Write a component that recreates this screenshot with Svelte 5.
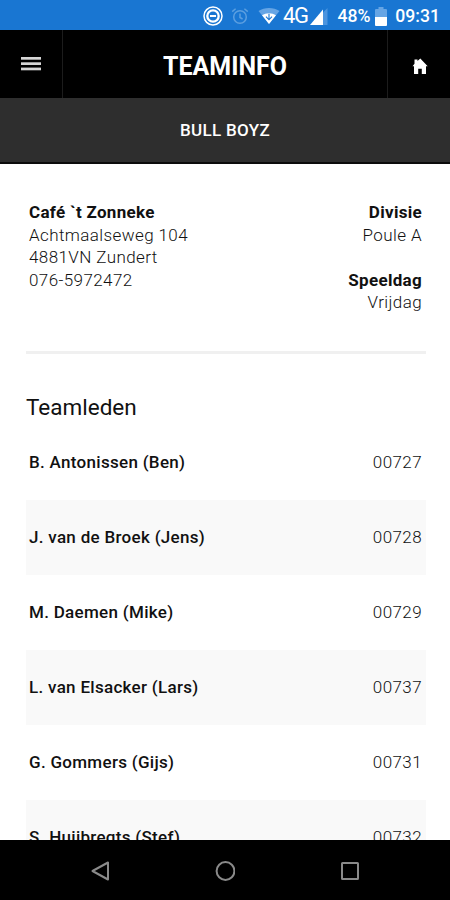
<script lang="ts">
    interface Member
    {
        name: string;
        code: string;
    }

    const members: Member[] = [
        { name: 'B. Antonissen (Ben)', code: '00727' },
        { name: 'J. van de Broek (Jens)', code: '00728' },
        { name: 'M. Daemen (Mike)', code: '00729' },
        { name: 'L. van Elsacker (Lars)', code: '00737' },
        { name: 'G. Gommers (Gijs)', code: '00731' },
        { name: 'S. Huijbregts (Stef)', code: '00732' }
    ];
</script>

<div class="screen">
    <div class="status-bar">
        <svg class="dnd" width="20" height="20" viewBox="0 0 20 20" fill="none" stroke="#ffffff">
            <circle cx="10" cy="10" r="9" stroke-width="1.5" />
            <circle cx="10" cy="10" r="5.7" stroke-width="2.3" />
            <path d="M7 10h6" stroke-width="2" />
        </svg>
        <svg class="alarm" width="18" height="18" viewBox="0 0 18 18" fill="none" stroke="#5c9fe0" stroke-width="1.5">
            <circle cx="9" cy="10" r="6.3" />
            <path d="M9 6.5v4l2.6 1.5M1.2 4.6l3.4-2.9M16.8 4.6l-3.4-2.9" />
        </svg>
        <svg class="wifi" width="22" height="18" viewBox="0 0 22 18">
            <path d="M11 17L0.5 4C6.5 0 15.5 0 21.5 4z" fill="#66a5e5" />
            <path d="M11 17L4 8.3C8 5.5 14 5.5 18 8.3z" fill="#ffffff" />
            <path d="M11 6.8v6M8 9.6l3 3.2 3-3.2" fill="none" stroke="#1976d2" stroke-width="1.1" />
        </svg>
        <span class="network">4G</span>
        <svg class="signal" width="18" height="17" viewBox="0 0 18 17">
            <path d="M13 4.4L17.5 0v17H13z" fill="#4b94df" />
            <path d="M13 1.5V17H0z" fill="#ffffff" />
        </svg>
        <span class="percent">48%</span>
        <svg class="battery" width="12" height="19" viewBox="0 0 12 19">
            <path d="M3.5 0h5v2H11q1 0 1 1v7H0V3q0-1 1-1h2.5z" fill="#66a5e5" />
            <path d="M0 10h12v8q0 1-1 1H1q-1 0-1-1z" fill="#ffffff" />
        </svg>
        <span class="time">09:31</span>
    </div>

    <header class="app-bar">
        <button class="bar-button menu" aria-label="Menu">
            <svg width="20" height="14" viewBox="0 0 20 14" fill="#d6d6d6">
                <rect y="0" width="20" height="2.7" />
                <rect y="5.3" width="20" height="2.7" />
                <rect y="10.6" width="20" height="2.7" />
            </svg>
        </button>
        <h1>TEAMINFO</h1>
        <button class="bar-button home" aria-label="Home">
            <svg width="16" height="17" viewBox="0 0 16 17" fill="#ffffff">
                <path d="M8.3 0.5L5.5 3V1.6H2.5V5.7L0.5 8.2H2V16h4.2v-5.2h3.6V16H14V8.2h1.7z" />
            </svg>
        </button>
    </header>

    <div class="team-name">BULL BOYZ</div>

    <main>
        <section class="details">
            <div>
                <strong>Café `t Zonneke</strong>
                <span>Achtmaalseweg 104</span>
                <span>4881VN Zundert</span>
                <span>076-5972472</span>
            </div>
            <div class="league">
                <strong>Divisie</strong>
                <span>Poule A</span>
                <strong class="spaced">Speeldag</strong>
                <span>Vrijdag</span>
            </div>
        </section>

        <h2>Teamleden</h2>

        <ul>
            {#each members as member (member.code)}
                <li>
                    <strong>{member.name}</strong>
                    <span>{member.code}</span>
                </li>
            {/each}
        </ul>
    </main>

    <nav class="nav-bar">
        <svg width="20" height="20" viewBox="0 0 20 20">
            <path d="M18 1.5v17L2.5 10z" />
        </svg>
        <svg width="20" height="20" viewBox="0 0 20 20">
            <circle cx="10.5" cy="10" r="8.9" />
        </svg>
        <svg width="20" height="20" viewBox="0 0 20 20">
            <rect x="2" y="2" width="16" height="16" rx="0.5" />
        </svg>
    </nav>
</div>

<style>
    :global(body)
    {
        margin: 0;
    }

    .screen
    {
        width: 450px;
        height: 900px;
        display: flex;
        flex-direction: column;
        overflow: hidden;
        background: #ffffff;
        color: #111111;
        font-family: Roboto, sans-serif;
        font-size: 17px;
        line-height: 22.5px;
        letter-spacing: 0.3px;
    }

    .status-bar
    {
        height: 30px;
        flex-shrink: 0;
        padding: 2px 10px 0 0;
        box-sizing: border-box;
        display: flex;
        align-items: center;
        justify-content: flex-end;
        background: #1976d2;
        color: #ffffff;
        font-weight: 500;
        font-size: 17.6px;
        letter-spacing: 0;
    }

    .alarm
    {
        margin-left: 8px;
    }

    .wifi
    {
        margin-left: 9px;
    }

    .network
    {
        margin-left: 3px;
        font-size: 22px;
        font-weight: 400;
        letter-spacing: -1.5px;
    }

    .signal
    {
        margin-left: 3px;
    }

    .percent
    {
        margin-left: 9px;
    }

    .battery
    {
        margin-left: 5px;
    }

    .time
    {
        margin-left: 8px;
    }

    .app-bar
    {
        height: 68px;
        flex-shrink: 0;
        display: flex;
        background: #000000;
        color: #ffffff;
    }

    .bar-button
    {
        width: 63px;
        padding: 0;
        box-sizing: border-box;
        border: 0;
        background: none;
        display: flex;
        align-items: center;
        justify-content: center;
    }

    .menu
    {
        border-right: 1px solid #1c1c1c;
    }

    .home
    {
        padding: 4px 0 0 1px;
        border-left: 1px solid #1c1c1c;
    }

    h1
    {
        flex: 1;
        margin: 0;
        padding-top: 4px;
        line-height: 66px;
        text-align: center;
        font-size: 25px;
        font-weight: 700;
        letter-spacing: 0;
    }

    .team-name
    {
        height: 66px;
        flex-shrink: 0;
        box-sizing: border-box;
        border-bottom: 2px solid #0c0c0c;
        background: #2e2e2e;
        color: #ffffff;
        line-height: 64px;
        text-align: center;
        font-weight: 500;
    }

    main
    {
        flex: 1;
        min-height: 0;
        overflow: hidden;
        padding: 37px 24px 0 26px;
    }

    .details
    {
        height: 153px;
        box-sizing: border-box;
        padding: 0 4px 0 3px;
        display: flex;
        justify-content: space-between;
        border-bottom: 3px solid #f0f0f0;
    }

    .details div
    {
        display: flex;
        flex-direction: column;
    }

    .details .league
    {
        text-align: right;
    }

    .details strong
    {
        font-weight: 700;
    }

    .details span,
    li span
    {
        font-weight: 300;
        letter-spacing: 0.4px;
    }

    .spaced
    {
        margin-top: 22.5px;
    }

    h2
    {
        margin: 38px 0 3px;
        line-height: 30px;
        font-size: 22.5px;
        font-weight: 400;
        letter-spacing: 0;
    }

    ul
    {
        margin: 0;
        padding: 0;
        list-style: none;
    }

    li
    {
        height: 75px;
        padding: 0 4px 0 3px;
        display: flex;
        align-items: center;
        justify-content: space-between;
    }

    li:nth-child(even)
    {
        background: #f9f9f9;
    }

    li strong
    {
        font-weight: 500;
    }

    .nav-bar
    {
        height: 60px;
        flex-shrink: 0;
        box-sizing: border-box;
        padding: 1px 90px 0;
        display: flex;
        align-items: center;
        justify-content: space-between;
        background: #000000;
    }

    .nav-bar svg
    {
        fill: none;
        stroke: #8a8a8a;
        stroke-width: 2;
        stroke-linejoin: round;
    }
</style>
